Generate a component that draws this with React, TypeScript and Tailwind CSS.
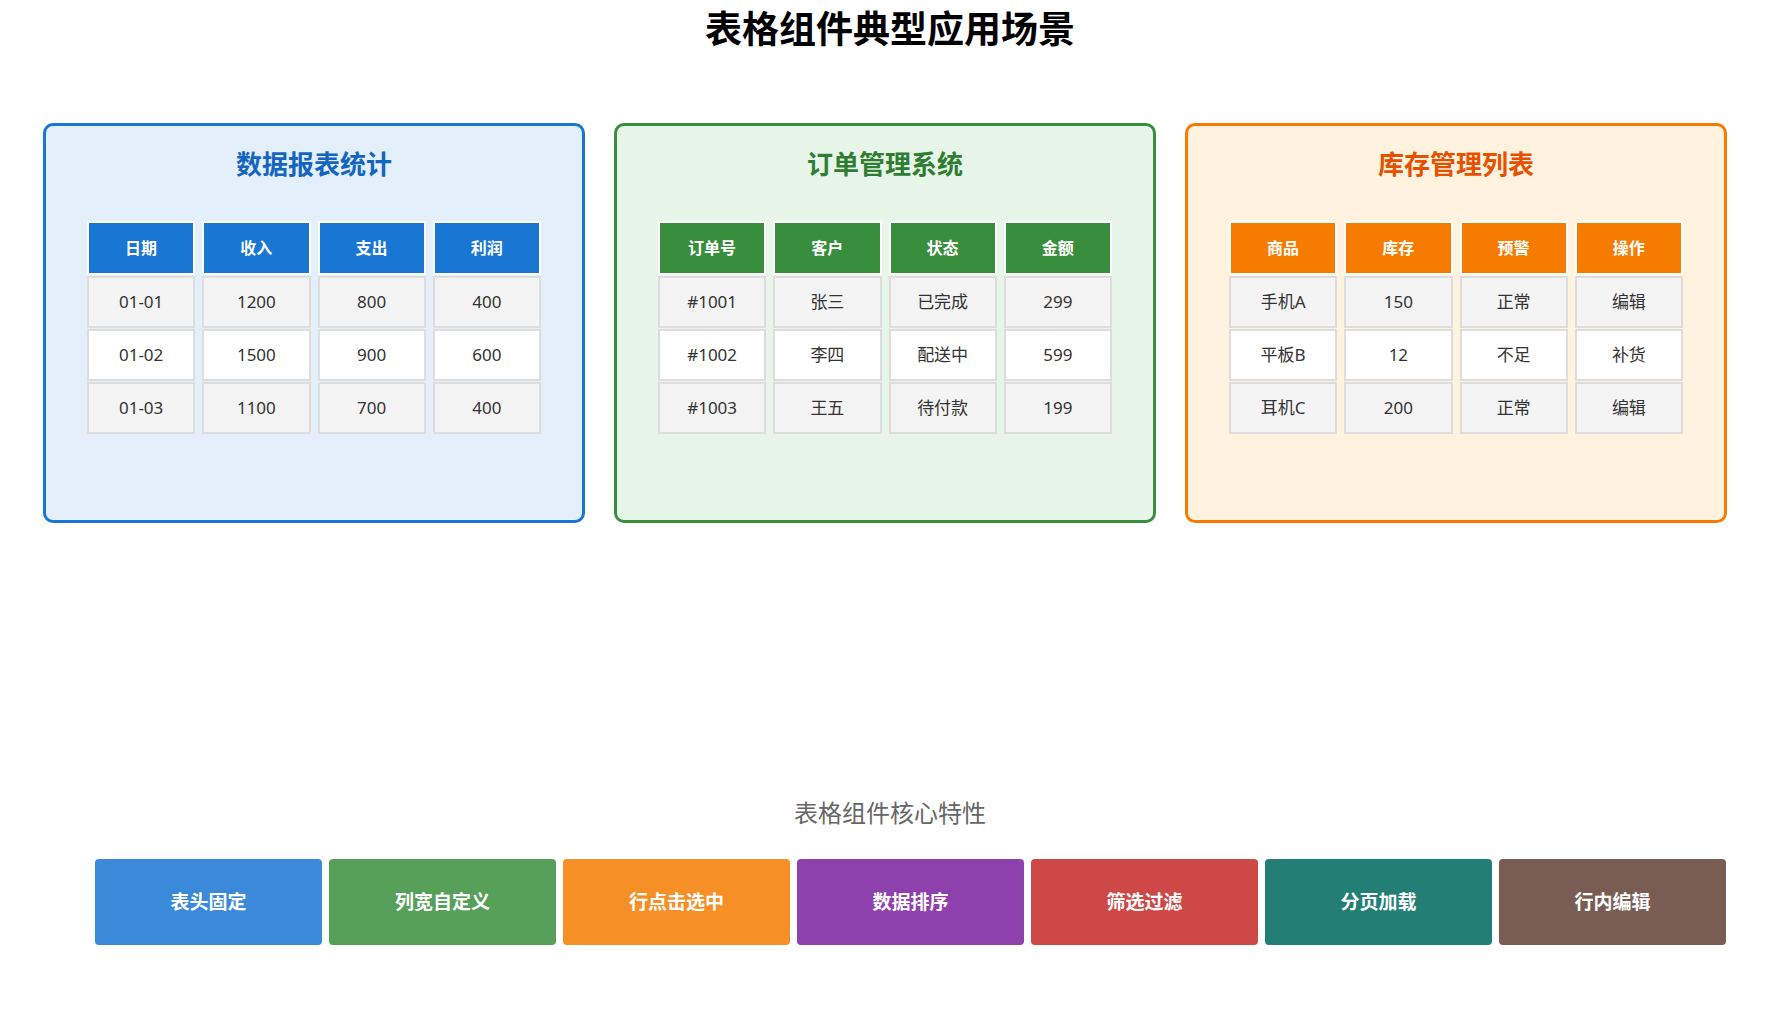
import React from 'react';

type Panel = {
  title: string;
  titleColor: string;
  border: string;
  bg: string;
  head: string;
  cols: string[];
  rows: string[][];
};

const panels: Panel[] = [
  {
    title: '数据报表统计',
    titleColor: 'text-[#1565c0]',
    border: 'border-[#1976d2]',
    bg: 'bg-[#e3f0fb]',
    head: 'bg-[#1976d2]',
    cols: ['日期', '收入', '支出', '利润'],
    rows: [
      ['01-01', '1200', '800', '400'],
      ['01-02', '1500', '900', '600'],
      ['01-03', '1100', '700', '400'],
    ],
  },
  {
    title: '订单管理系统',
    titleColor: 'text-[#2e7d32]',
    border: 'border-[#388e3c]',
    bg: 'bg-[#e8f5e9]',
    head: 'bg-[#388e3c]',
    cols: ['订单号', '客户', '状态', '金额'],
    rows: [
      ['#1001', '张三', '已完成', '299'],
      ['#1002', '李四', '配送中', '599'],
      ['#1003', '王五', '待付款', '199'],
    ],
  },
  {
    title: '库存管理列表',
    titleColor: 'text-[#e65100]',
    border: 'border-[#f57c00]',
    bg: 'bg-[#fff3e0]',
    head: 'bg-[#f57c00]',
    cols: ['商品', '库存', '预警', '操作'],
    rows: [
      ['手机A', '150', '正常', '编辑'],
      ['平板B', '12', '不足', '补货'],
      ['耳机C', '200', '正常', '编辑'],
    ],
  },
];

const features = [
  ['表头固定', 'bg-[#3b8ad9]'],
  ['列宽自定义', 'bg-[#57a05a]'],
  ['行点击选中', 'bg-[#f68f26]'],
  ['数据排序', 'bg-[#8e41ad]'],
  ['筛选过滤', 'bg-[#cf4848]'],
  ['分页加载', 'bg-[#237f76]'],
  ['行内编辑', 'bg-[#795d55]'],
];

const font = { fontFamily: '"Noto Sans", "Noto Sans CJK SC", sans-serif' };

export default function App() {
  return (
    <div className="w-[1780px] h-[1029px] bg-white relative" style={font}>
      <h1 className="text-center text-[37px] font-bold text-black leading-none pt-[10px]">表格组件典型应用场景</h1>

      <div className="flex gap-[29px] pl-[43px] mt-[76px]">
        {panels.map((p) => (
          <div key={p.title} className={`w-[542px] h-[400px] border-[3px] rounded-[10px] ${p.border} ${p.bg}`}>
            <h2 className={`text-center text-[26px] font-bold mt-[25px] leading-none ${p.titleColor}`}>{p.title}</h2>
            <div className="grid grid-cols-4 gap-x-[7px] gap-y-[1px] mx-[41px] mt-[44px]">
              {p.cols.map((c) => (
                <div key={c} className={`h-[54px] border-2 border-white flex items-center justify-center text-white font-bold text-[16px] ${p.head}`}>
                  {c}
                </div>
              ))}
              {p.rows.map((r, i) =>
                r.map((v, j) => (
                  <div
                    key={i + '-' + j}
                    className={`h-[52px] border-2 border-[#dddddd] flex items-center justify-center text-[17px] text-[#333] ${i === 1 ? 'bg-white' : 'bg-[#f4f4f4]'}`}
                  >
                    {v}
                  </div>
                ))
              )}
            </div>
          </div>
        ))}
      </div>

      <div className="text-center text-[24px] text-[#666] mt-[278px] leading-none">表格组件核心特性</div>
      <div className="flex gap-[7px] pl-[95px] mt-[34px]">
        {features.map(([t, c]) => (
          <div key={t} className={`w-[227px] h-[86px] rounded-[4px] flex items-center justify-center text-white font-bold text-[19px] ${c}`}>
            {t}
          </div>
        ))}
      </div>
    </div>
  );
}
